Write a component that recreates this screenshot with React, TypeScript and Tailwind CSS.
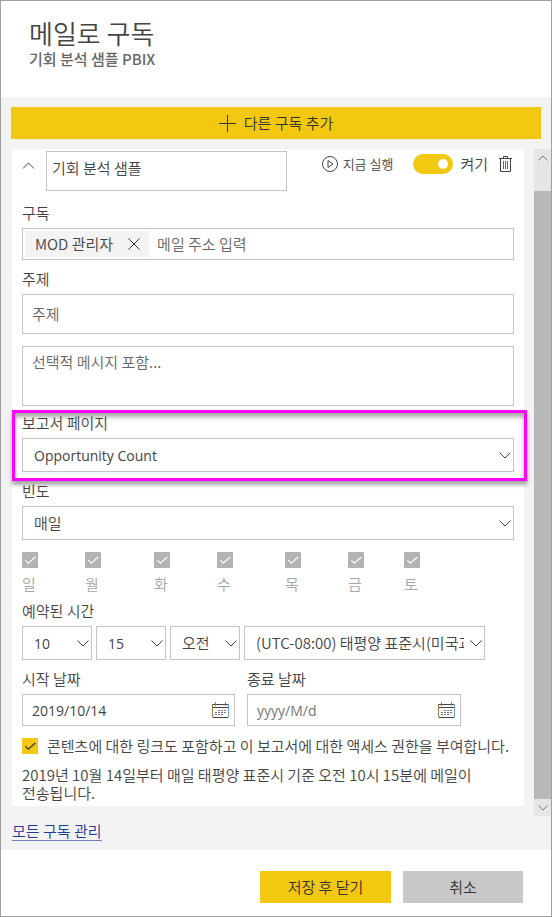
import type { ReactNode } from "react";

const boxClass = "block w-full rounded-none border border-[#c4c4c4] bg-white text-[#444] outline-none";

function Label({ htmlFor, children }: { htmlFor: string; children: ReactNode }) {
  return (
    <label htmlFor={htmlFor} className="mb-[5px] block leading-5">
      {children}
    </label>
  );
}

function Select({
  id,
  label,
  options,
  className = "w-full",
  latin = false,
}: {
  id: string;
  label?: string;
  options: string[];
  className?: string;
  latin?: boolean;
}) {
  return (
    <div className={`relative ${className}`}>
      <select
        id={id}
        aria-label={label}
        className={`${boxClass} h-[34px] appearance-none overflow-hidden pr-5 pl-[11px] whitespace-nowrap ${
          latin ? "font-['Open_Sans','Noto_Sans',sans-serif] text-[14px] font-normal" : "text-[15px]"
        }`}
      >
        {options.map((option) => (
          <option key={option}>{option}</option>
        ))}
      </select>
      <svg
        viewBox="0 0 12 7"
        className="pointer-events-none absolute top-[14px] right-[3px] h-[7px] w-3"
        fill="none"
        stroke="#444"
        aria-hidden="true"
      >
        <path d="M.5.5 6 6 11.5.5" />
      </svg>
    </div>
  );
}

function CheckBox({ id, disabled = false }: { id: string; disabled?: boolean }) {
  return (
    <span className="grid size-4 shrink-0">
      <input
        id={id}
        type="checkbox"
        defaultChecked
        disabled={disabled}
        className="size-4 appearance-none bg-[#f2c811] [grid-area:1/1] disabled:bg-[#b3b3b3]"
      />
      <svg
        viewBox="0 0 16 16"
        className="pointer-events-none size-4 [grid-area:1/1]"
        fill="none"
        stroke={disabled ? "#fff" : "#333"}
        strokeWidth="1.2"
        aria-hidden="true"
      >
        <path d="m3.300 8.200 3 3L13.300 5" />
      </svg>
    </span>
  );
}

function CalendarIcon() {
  return (
    <svg viewBox="0 0 17 16" className="h-4 w-[17px]" fill="none" aria-hidden="true">
      <path d="M.5 2v13.500" stroke="#a87c48" />
      <path d="M16.500 2v13.500" stroke="#6ba3e0" />
      <path d="M1 2.500h15M1 5.500h15M1 15.500h15" stroke="#444" />
      <path d="M3.500 0v4M13.500 0v4" stroke="#a87c48" />
      <path d="M6 8.500h8M3 10.500h11M3 12.500h8" strokeDasharray="2 1" stroke="#777" />
    </svg>
  );
}

function DateField({ id, label, value, className }: { id: string; label: string; value?: string; className: string }) {
  return (
    <div className={className}>
      <Label htmlFor={id}>{label}</Label>
      <div className="flex h-8 items-center border border-[#c4c4c4] pr-[5px] pl-[9px]">
        <input
          id={id}
          type="text"
          defaultValue={value}
          placeholder="yyyy/M/d"
          className="min-w-0 flex-1 font-['Open_Sans','Noto_Sans',sans-serif] text-[14px] font-normal outline-none placeholder:text-[#777]"
        />
        <button type="button" aria-label={`${label} 선택`}>
          <CalendarIcon />
        </button>
      </div>
    </div>
  );
}

const days = ["일", "월", "화", "수", "목", "금", "토"];

export default function App() {
  return (
    <main className="border border-[#a0a0a0] bg-white font-['Noto_Sans_CJK_KR',sans-serif] text-[15px] font-[350] text-[#444]">
      <header className="h-24 px-7 pt-4">
        <h1 className="text-[26px] leading-8 font-[350] text-[#444]">메일로 구독</h1>
        <p className="text-[15px] leading-5 font-medium text-[#666]">기회 분석 샘플 PBIX</p>
      </header>

      <section className="bg-[#f3f3f3] pt-[10px]">
        <div className="px-[10px]">
          <button
            type="button"
            className="flex h-8 w-full items-center justify-center gap-2 bg-[#f2c811] text-[#333]"
          >
            <svg viewBox="0 0 17 17" className="size-[17px]" stroke="#333" aria-hidden="true">
              <path d="M8.500 0v17M0 8.500h17" />
            </svg>
            다른 구독 추가
          </button>
        </div>

        <div className="mt-[10px] flex gap-[10px] pl-[11px]">
          <form className="mb-[10px] min-w-0 flex-1 bg-white px-[10px] pt-[2px] pb-1">
            <div className="flex items-start">
              <button type="button" aria-label="접기" className="flex h-7 w-6 items-center">
                <svg viewBox="0 0 12 7" className="h-[7px] w-[13px]" fill="none" stroke="#444" aria-hidden="true">
                  <path d="M.5 6.5 6 1l5.500 5.500" />
                </svg>
              </button>
              <input
                aria-label="구독 이름"
                defaultValue="기회 분석 샘플"
                className="h-10 w-[241px] border border-[#c4c4c4] px-[5px] pb-2 outline-none"
              />
              <div className="ml-auto flex h-[26px] items-center pr-[2px]">
                <button type="button" className="flex items-center gap-1 text-[13px]">
                  <svg viewBox="0 0 18 18" className="size-[18px]" fill="none" stroke="#444" aria-hidden="true">
                    <circle cx="9" cy="9" r="7.500" />
                    <path d="M7 5.500v7L12 9z" />
                  </svg>
                  지금 실행
                </button>
                <input
                  id="enabled"
                  type="checkbox"
                  role="switch"
                  defaultChecked
                  className="ml-5 flex h-5 w-10 appearance-none items-center justify-end rounded-full bg-[#f2c811] pr-[5px] before:size-[10px] before:rounded-full before:bg-white"
                />
                <label htmlFor="enabled" className="ml-[7px]">
                  켜기
                </label>
                <button type="button" aria-label="삭제" className="ml-[11px]">
                  <svg viewBox="0 0 13 16" className="h-4 w-[13px]" fill="none" stroke="#444" aria-hidden="true">
                    <path d="M0 2.500h13M4.500 2.500v-2h4v2M1.500 2.500v13h10v-13" />
                    <path d="M4.500 5v8M8.500 5v8" stroke="#7a5a80" />
                    <path d="M6.500 5v8" stroke="#4a8a5a" />
                  </svg>
                </button>
              </div>
            </div>

            <div className="mt-3">
              <Label htmlFor="recipients">구독</Label>
              <div className="flex h-8 items-center border border-[#c4c4c4] px-[2px]">
                <span className="flex h-[26px] items-center gap-[15px] bg-[#f3f3f3] pr-[9px] pl-[10px]">
                  MOD 관리자
                  <button type="button" aria-label="MOD 관리자 제거">
                    <svg viewBox="0 0 12 12" className="size-3" stroke="#333" aria-hidden="true">
                      <path d="m.5.5 11 11M11.500.5l-11 11" />
                    </svg>
                  </button>
                </span>
                <input
                  id="recipients"
                  type="text"
                  placeholder="메일 주소 입력"
                  className="ml-2 min-w-0 flex-1 outline-none placeholder:text-[#666]"
                />
              </div>
            </div>

            <div className="mt-[9px]">
              <Label htmlFor="subject">주제</Label>
              <input
                id="subject"
                type="text"
                placeholder="주제"
                className={`${boxClass} h-10 px-[9px] pb-[2px] placeholder:text-[#666]`}
              />
            </div>

            <textarea
              aria-label="메시지"
              placeholder="선택적 메시지 포함..."
              className={`${boxClass} mt-3 h-[60px] resize-none px-[9px] pt-[5px] leading-5 placeholder:text-[#666]`}
            />

            <div className="relative mt-[7px]">
              <Label htmlFor="page">보고서 페이지</Label>
              <Select id="page" options={["Opportunity Count"]} latin />
              <div className="pointer-events-none absolute -top-[3px] -right-[13px] -bottom-[9px] -left-[10px] border-[3px] border-[#ff00ff] shadow-[0_4px_4px_rgba(0,0,0,0.35),inset_0_4px_4px_rgba(0,0,0,0.35)]" />
            </div>

            <div className="mt-[9px]">
              <Label htmlFor="frequency">빈도</Label>
              <Select id="frequency" options={["매일", "매주"]} />
            </div>

            <div className="mt-3 grid grid-cols-[63px_69px_63px_68px_63px_56px_auto] text-[#a6a6a6]">
              {days.map((day) => (
                <div key={day}>
                  <CheckBox id={`day-${day}`} disabled />
                  <label htmlFor={`day-${day}`} className="mt-[6px] block leading-5">
                    {day}
                  </label>
                </div>
              ))}
            </div>

            <div className="mt-[7px]">
              <Label htmlFor="hour">예약된 시간</Label>
              <div className="flex gap-1">
                <Select id="hour" options={["10"]} className="w-[70px]" latin />
                <Select id="minute" label="분" options={["15"]} className="w-[70px]" latin />
                <Select id="period" label="오전/오후" options={["오전", "오후"]} className="w-[70px]" />
                <Select
                  id="zone"
                  label="표준 시간대"
                  options={["(UTC-08:00) 태평양 표준시(미국과 캐나다)"]}
                  className="w-[241px]"
                />
              </div>
            </div>

            <div className="mt-[9px] flex gap-3">
              <DateField id="start" label="시작 날짜" value="2019/10/14" className="w-[213px]" />
              <DateField id="end" label="종료 날짜" className="w-[214px]" />
            </div>

            <div className="mt-[10px] flex items-center gap-[9px]">
              <CheckBox id="access" />
              <label htmlFor="access" className="leading-5 whitespace-nowrap">
                콘텐츠에 대한 링크도 포함하고 이 보고서에 대한 액세스 권한을 부여합니다.
              </label>
            </div>

            <p className="mt-[10px] pr-4 leading-[18px] break-keep">
              2019년 10월 14일부터 매일 태평양 표준시 기준 오전 10시 15분에 메일이 전송됩니다.
            </p>
          </form>

          <div className="flex w-[17px] flex-col bg-[#b8b8b8]" aria-hidden="true">
            <div className="flex h-[42px] justify-center bg-[#e6e6e6] pt-[6px]">
              <svg viewBox="0 0 10 6" className="h-[6px] w-[10px]" fill="none" stroke="#777">
                <path d="M.5 5.500 5 1l4.500 4.500" />
              </svg>
            </div>
            <div className="mt-auto flex h-[17px] items-center justify-center bg-[#e6e6e6]">
              <svg viewBox="0 0 10 6" className="h-[6px] w-[10px]" fill="none" stroke="#777">
                <path d="M.5.5 5 5 9.500.5" />
              </svg>
            </div>
          </div>
        </div>

        <div className="flex h-[34px] items-start pt-[5px] pl-[11px]">
          <a href="#subscriptions" className="border-b border-[#6f7fc0] leading-[19px] text-[#203a8f]">
            모든 구독 관리
          </a>
        </div>
      </section>

      <footer className="flex justify-end gap-3 pt-[21px] pr-7 pb-[13px] text-[#333]">
        <button type="button" className="h-8 w-[131px] bg-[#f2c811]">
          저장 후 닫기
        </button>
        <button type="button" className="h-8 w-[120px] bg-[#c8c8c8]">
          취소
        </button>
      </footer>
    </main>
  );
}
